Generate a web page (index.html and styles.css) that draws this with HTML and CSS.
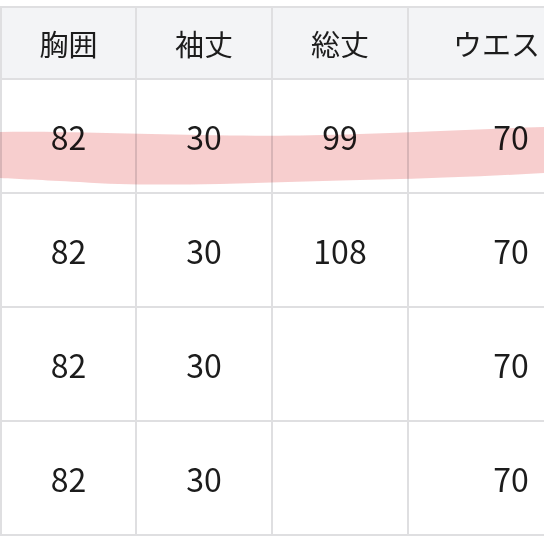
FILE: index.html
```html
<!DOCTYPE html>
<html lang="ja">
<head>
<meta charset="utf-8">
<title>サイズ表</title>
<link rel="stylesheet" href="styles.css">
</head>
<body>
<div class="sheet">
  <table class="size-table">
    <colgroup>
      <col class="c1"><col class="c2"><col class="c3"><col class="c4">
    </colgroup>
    <thead>
      <tr>
        <th>胸囲</th>
        <th>袖丈</th>
        <th>総丈</th>
        <th>ウエスト</th>
      </tr>
    </thead>
    <tbody>
      <tr><td>82</td><td>30</td><td>99</td><td>70</td></tr>
      <tr><td>82</td><td>30</td><td>108</td><td>70</td></tr>
      <tr><td>82</td><td>30</td><td></td><td>70</td></tr>
      <tr><td>82</td><td>30</td><td></td><td>70</td></tr>
    </tbody>
  </table>
  <svg class="marker" width="544" height="544" viewBox="0 0 544 544" aria-hidden="true">
    <path d="M0 132 C 60 131, 120 134, 200 135 C 260 136, 300 136, 360 134 C 420 132, 480 129, 544 127 L 544 173 C 490 176, 440 178, 400 179 C 330 181, 280 182, 220 184 C 160 185, 120 185, 80 182 C 40 180, 20 179, 0 178 Z" class="marker-fill"/>
  </svg>
</div>
</body>
</html>
```

FILE: styles.css
```css
html, body {
  margin: 0;
  padding: 0;
  background: #ffffff;
  overflow: hidden;
  width: 544px;
  height: 544px;
}

.sheet {
  position: relative;
  width: 544px;
  height: 544px;
  padding-top: 6px;
  box-sizing: border-box;
  overflow: hidden;
}

.size-table {
  width: 615px;
  min-width: 615px;
  border-collapse: separate;
  border-spacing: 0;
  table-layout: fixed;
  border-top: 2px solid #dfdfe1;
  border-left: 2px solid #dfdfe1;
  font-family: "Noto Sans CJK JP", "Noto Sans", sans-serif;
  color: #1c1c1c;
}

.size-table th,
.size-table td {
  box-sizing: border-box;
  border-right: 2px solid #dfdfe1;
  border-bottom: 2px solid #dfdfe1;
  padding: 0;
  text-align: center;
  vertical-align: middle;
}

.size-table th {
  height: 72px;
  background: #f3f4f6;
  font-size: 29px;
  font-weight: 400;
  line-height: 1;
}

.size-table td {
  height: 114px;
  font-size: 32px;
  line-height: 1;
}

.c1 { width: 135px; }
.c2 { width: 136px; }
.c3 { width: 136px; }
.c4 { width: 206px; }

.marker {
  position: absolute;
  left: 0;
  top: 0;
  pointer-events: none;
  mix-blend-mode: multiply;
}

.marker-fill {
  fill: #f6c9c9;
  opacity: 0.9;
}
```
